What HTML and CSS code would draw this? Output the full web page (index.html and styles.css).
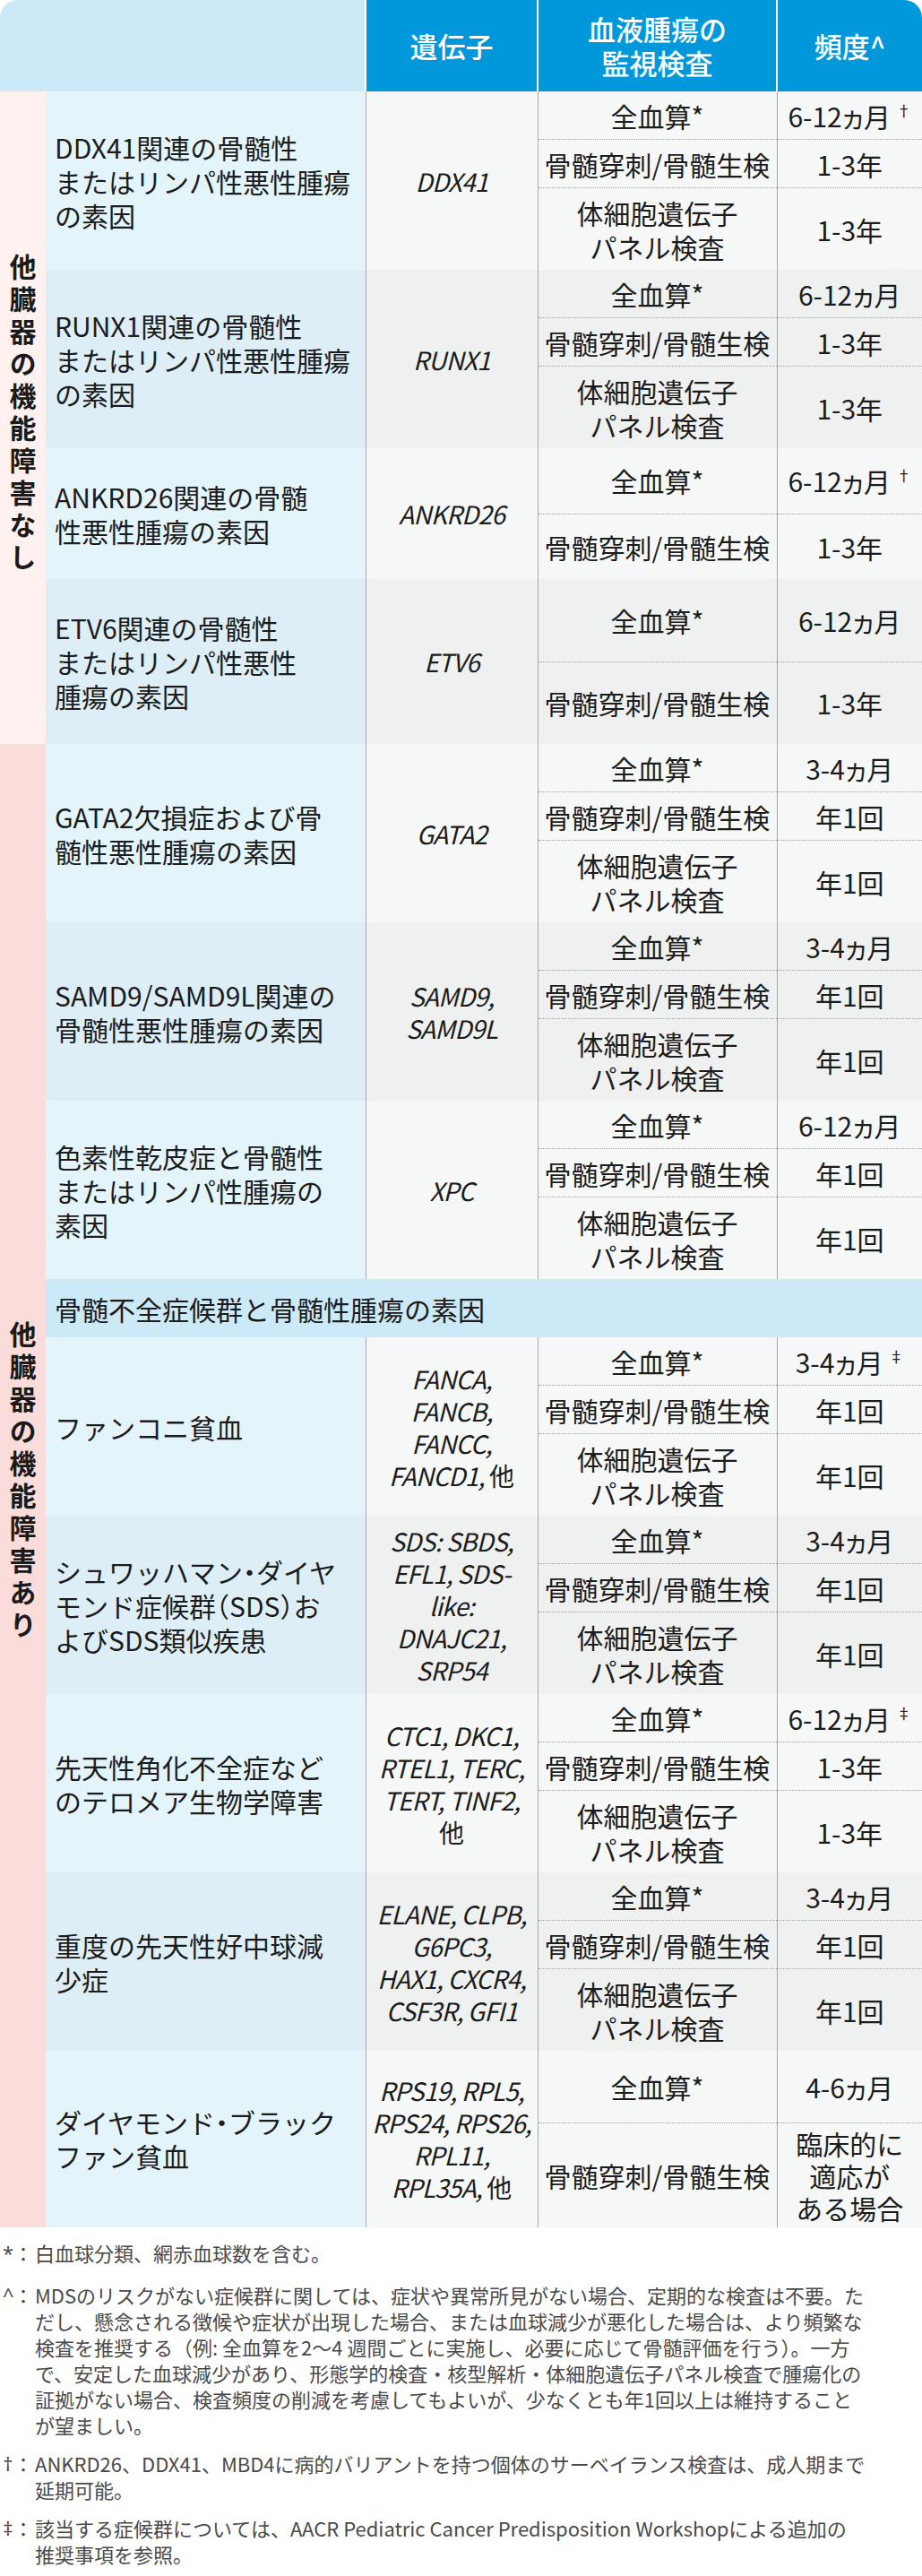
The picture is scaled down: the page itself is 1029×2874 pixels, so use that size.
FILE: index.html
```html
<!DOCTYPE html>
<html lang="ja">
<head>
<meta charset="utf-8">
<title>監視検査</title>
<link rel="stylesheet" href="styles.css">
</head>
<body>
<div class="wrap">
<table class="tbl">
  <colgroup>
    <col class="c-cat"><col class="c-name"><col class="c-gene"><col class="c-test"><col class="c-freq">
  </colgroup>
  <thead>
    <tr>
      <th colspan="2" class="h-blank"></th>
      <th class="h">遺伝子</th>
      <th class="h">血液腫瘍の<br>監視検査</th>
      <th class="h">頻度^</th>
    </tr>
  </thead>
  <tbody>
    <tr class="lt">
      <td class="cat cat1" rowspan="10"><span class="vt">他臓器の機能障害なし</span></td>
      <td class="name" rowspan="3">DDX41関連の骨髄性<br>またはリンパ性悪性腫瘍<br>の素因</td>
      <td class="gene" rowspan="3">DDX41</td>
      <td class="test">全血算*</td>
      <td class="freq">6-12ヵ月<sup>†</sup></td>
    </tr>
    <tr class="lt"><td class="test dot">骨髄穿刺/骨髄生検</td><td class="freq dot">1-3年</td></tr>
    <tr class="lt"><td class="test dot">体細胞遺伝子<br>パネル検査</td><td class="freq dot">1-3年</td></tr>

    <tr class="dk">
      <td class="name" rowspan="3">RUNX1関連の骨髄性<br>またはリンパ性悪性腫瘍<br>の素因</td>
      <td class="gene" rowspan="3">RUNX1</td>
      <td class="test">全血算*</td>
      <td class="freq">6-12ヵ月</td>
    </tr>
    <tr class="dk"><td class="test dot">骨髄穿刺/骨髄生検</td><td class="freq dot">1-3年</td></tr>
    <tr class="dk"><td class="test dot">体細胞遺伝子<br>パネル検査</td><td class="freq dot">1-3年</td></tr>

    <tr class="lt">
      <td class="name" rowspan="2">ANKRD26関連の骨髄<br>性悪性腫瘍の素因</td>
      <td class="gene" rowspan="2">ANKRD26</td>
      <td class="test">全血算*</td>
      <td class="freq">6-12ヵ月<sup>†</sup></td>
    </tr>
    <tr class="lt"><td class="test dot">骨髄穿刺/骨髄生検</td><td class="freq dot">1-3年</td></tr>

    <tr class="dk">
      <td class="name" rowspan="2">ETV6関連の骨髄性<br>またはリンパ性悪性<br>腫瘍の素因</td>
      <td class="gene" rowspan="2">ETV6</td>
      <td class="test">全血算*</td>
      <td class="freq">6-12ヵ月</td>
    </tr>
    <tr class="dk"><td class="test dot">骨髄穿刺/骨髄生検</td><td class="freq dot">1-3年</td></tr>

    <tr class="lt">
      <td class="cat cat2" rowspan="24"><span class="vt">他臓器の機能障害あり</span></td>
      <td class="name" rowspan="3">GATA2欠損症および骨<br>髄性悪性腫瘍の素因</td>
      <td class="gene" rowspan="3">GATA2</td>
      <td class="test">全血算*</td>
      <td class="freq">3-4ヵ月</td>
    </tr>
    <tr class="lt"><td class="test dot">骨髄穿刺/骨髄生検</td><td class="freq dot">年1回</td></tr>
    <tr class="lt"><td class="test dot">体細胞遺伝子<br>パネル検査</td><td class="freq dot">年1回</td></tr>

    <tr class="dk">
      <td class="name" rowspan="3">SAMD9/SAMD9L関連の<br>骨髄性悪性腫瘍の素因</td>
      <td class="gene" rowspan="3">SAMD9,<br>SAMD9L</td>
      <td class="test">全血算*</td>
      <td class="freq">3-4ヵ月</td>
    </tr>
    <tr class="dk"><td class="test dot">骨髄穿刺/骨髄生検</td><td class="freq dot">年1回</td></tr>
    <tr class="dk"><td class="test dot">体細胞遺伝子<br>パネル検査</td><td class="freq dot">年1回</td></tr>

    <tr class="lt">
      <td class="name" rowspan="3">色素性乾皮症と骨髄性<br>またはリンパ性腫瘍の<br>素因</td>
      <td class="gene" rowspan="3">XPC</td>
      <td class="test">全血算*</td>
      <td class="freq">6-12ヵ月</td>
    </tr>
    <tr class="lt"><td class="test dot">骨髄穿刺/骨髄生検</td><td class="freq dot">年1回</td></tr>
    <tr class="lt"><td class="test dot">体細胞遺伝子<br>パネル検査</td><td class="freq dot">年1回</td></tr>

    <tr class="sec"><td colspan="4" class="sec-cell">骨髄不全症候群と骨髄性腫瘍の素因</td></tr>

    <tr class="lt">
      <td class="name" rowspan="3">ファンコニ貧血</td>
      <td class="gene" rowspan="3">FANCA,<br>FANCB,<br>FANCC,<br>FANCD1, <span class="up">他</span></td>
      <td class="test">全血算*</td>
      <td class="freq">3-4ヵ月<sup>‡</sup></td>
    </tr>
    <tr class="lt"><td class="test dot">骨髄穿刺/骨髄生検</td><td class="freq dot">年1回</td></tr>
    <tr class="lt"><td class="test dot">体細胞遺伝子<br>パネル検査</td><td class="freq dot">年1回</td></tr>

    <tr class="dk">
      <td class="name" rowspan="3">シュワッハマン・ダイヤ<br>モンド症候群（SDS）お<br>よびSDS類似疾患</td>
      <td class="gene" rowspan="3">SDS: SBDS,<br>EFL1, SDS-<br>like:<br>DNAJC21,<br>SRP54</td>
      <td class="test">全血算*</td>
      <td class="freq">3-4ヵ月</td>
    </tr>
    <tr class="dk"><td class="test dot">骨髄穿刺/骨髄生検</td><td class="freq dot">年1回</td></tr>
    <tr class="dk"><td class="test dot">体細胞遺伝子<br>パネル検査</td><td class="freq dot">年1回</td></tr>

    <tr class="lt">
      <td class="name" rowspan="3">先天性角化不全症など<br>のテロメア生物学障害</td>
      <td class="gene" rowspan="3">CTC1, DKC1,<br>RTEL1, TERC,<br>TERT, TINF2,<br><span class="up">他</span></td>
      <td class="test">全血算*</td>
      <td class="freq">6-12ヵ月<sup>‡</sup></td>
    </tr>
    <tr class="lt"><td class="test dot">骨髄穿刺/骨髄生検</td><td class="freq dot">1-3年</td></tr>
    <tr class="lt"><td class="test dot">体細胞遺伝子<br>パネル検査</td><td class="freq dot">1-3年</td></tr>

    <tr class="dk">
      <td class="name" rowspan="3">重度の先天性好中球減<br>少症</td>
      <td class="gene" rowspan="3">ELANE, CLPB,<br>G6PC3,<br>HAX1, CXCR4,<br>CSF3R, GFI1</td>
      <td class="test">全血算*</td>
      <td class="freq">3-4ヵ月</td>
    </tr>
    <tr class="dk"><td class="test dot">骨髄穿刺/骨髄生検</td><td class="freq dot">年1回</td></tr>
    <tr class="dk"><td class="test dot">体細胞遺伝子<br>パネル検査</td><td class="freq dot">年1回</td></tr>

    <tr class="lt tall">
      <td class="name" rowspan="2">ダイヤモンド・ブラック<br>ファン貧血</td>
      <td class="gene" rowspan="2">RPS19, RPL5,<br>RPS24, RPS26,<br>RPL11,<br>RPL35A, <span class="up">他</span></td>
      <td class="test">全血算*</td>
      <td class="freq">4-6ヵ月</td>
    </tr>
    <tr class="lt"><td class="test dot">骨髄穿刺/骨髄生検</td><td class="freq dot multi">臨床的に<br>適応が<br>ある場合</td></tr>
  </tbody>
</table>
</div>

<div class="notes">
  <div class="note"><span class="mk"><span class="sym">*</span>：</span><p>白血球分類、網赤血球数を含む。</p></div>
  <div class="note"><span class="mk"><span class="sym">^</span>：</span><p>MDSのリスクがない症候群に関しては、症状や異常所見がない場合、定期的な検査は不要。た<br>だし、懸念される徴候や症状が出現した場合、または血球減少が悪化した場合は、より頻繁な<br>検査を推奨する（例: 全血算を2〜4 週間ごとに実施し、必要に応じて骨髄評価を行う）。一方<br>で、安定した血球減少があり、形態学的検査・核型解析・体細胞遺伝子パネル検査で腫瘍化の<br>証拠がない場合、検査頻度の削減を考慮してもよいが、少なくとも年1回以上は維持すること<br>が望ましい。</p></div>
  <div class="note"><span class="mk"><span class="sym">†</span>：</span><p>ANKRD26、DDX41、MBD4に病的バリアントを持つ個体のサーベイランス検査は、成人期まで<br>延期可能。</p></div>
  <div class="note"><span class="mk"><span class="sym">‡</span>：</span><p>該当する症候群については、AACR Pediatric Cancer Predisposition Workshopによる追加の<br>推奨事項を参照。</p></div>
</div>
</body>
</html>
```

FILE: styles.css
```css
html, body {
  margin: 0;
  padding: 0;
  background: #ffffff;
}

body {
  font-family: "Noto Sans CJK JP", "Noto Sans", sans-serif;
  color: #1c1c1c;
  width: 1029px;
}

.wrap {
  border-radius: 20px 20px 0 0;
  overflow: hidden;
}

.tbl {
  width: 1029px;
  border-collapse: collapse;
  table-layout: fixed;
}

.c-cat { width: 51px; }
.c-name { width: 357px; }
.c-gene { width: 192px; }
.c-test { width: 267px; }
.c-freq { width: 162px; }

th {
  padding: 13px 4px;
  font-size: 31px;
  line-height: 38px;
  font-weight: 500;
  color: #ffffff;
  text-align: center;
  vertical-align: middle;
}

.h-blank {
  background: #cbe9f7;
}

.h {
  background: #0098da;
  border-left: 2px solid #ffffff;
}

td {
  padding: 7.5px 4px;
  font-size: 30px;
  line-height: 38px;
  vertical-align: middle;
  text-align: center;
  white-space: nowrap;
}

.cat {
  padding: 0;
}

.cat1 { background: #fef1f0; }
.cat2 { background: #fadcdb; }

.vt {
  display: inline-block;
  writing-mode: vertical-rl;
  font-size: 30px;
  line-height: 38px;
  font-weight: 700;
  letter-spacing: 6px;
  color: #1a1a1a;
}

.name {
  text-align: left;
  padding: 35px 6px 35px 10px;
  font-feature-settings: "halt";
}

.gene {
  font-style: italic;
  font-size: 28px;
  letter-spacing: -0.8px;
  line-height: 36px;
  padding: 8px 2px;
  border-left: 1px solid #a9a9a9;
  border-right: 1px solid #a9a9a9;
}

.gene .up {
  font-style: normal;
  letter-spacing: 0;
}

.freq {
  border-left: 1px solid #a9a9a9;
  font-feature-settings: "palt";
}

.dot {
  border-top: 1px dotted #a0a0a0;
}

.freq.multi {
  line-height: 36px;
  padding: 4px 4px;
  font-feature-settings: normal;
}

.freq sup {
  font-size: 17px;
  line-height: 0;
  margin-left: 6px;
  vertical-align: 12px;
}

.lt td { background: #f6f8f8; }
.dk td { background: #eff1f1; }
.lt td.name { background: #e3f4fb; }
.dk td.name { background: #ddeef6; }
.lt td.cat1, .dk td.cat1 { background: #fef1f0; }
.lt td.cat2, .dk td.cat2 { background: #fadcdb; }

.tall {
  height: 80px;
}

.sec-cell {
  background: #cce9f7;
  text-align: left;
  padding: 13.5px 10px;
}

.notes {
  padding: 14px 0 10px 3px;
  font-size: 22px;
  line-height: 29px;
  color: #4a4a4a;
}

.note {
  display: grid;
  grid-template-columns: 36px 1fr;
  margin-bottom: 14px;
}

.note:first-child {
  margin-bottom: 18px;
}

.note p {
  margin: 0;
}

.mk {
  display: flex;
  white-space: nowrap;
}

.sym {
  width: 12px;
  text-align: center;
  font-family: "Noto Sans", "DejaVu Sans", sans-serif;
}
```
